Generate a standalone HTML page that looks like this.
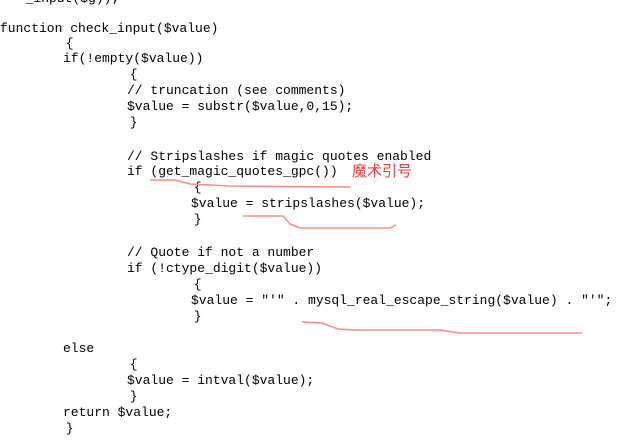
<!DOCTYPE html>
<html><head><meta charset="utf-8"><style>
body{margin:0;width:626px;height:445px;background:#fff;overflow:hidden;position:relative}
.l{position:absolute;left:0;font-family:"Liberation Mono","Noto Sans CJK SC",monospace;font-size:13px;line-height:16px;white-space:pre;color:#000}
.r{position:absolute;font-family:"Noto Sans CJK SC",sans-serif;font-size:15px;color:#f03a3a;line-height:16px}
</style></head><body>
<div class="l" style="top:-9px;left:10px">  _input($g));</div>
<div class="l" style="top:21px">function check_input($value)</div>
<div class="l" style="top:36px;left:58px"> {</div>
<div class="l" style="top:51px;left:63px">if(!empty($value))</div>
<div class="l" style="top:67px;left:122px"> {</div>
<div class="l" style="top:83px;left:127px">// truncation (see comments)</div>
<div class="l" style="top:99px;left:127px">$value = substr($value,0,15);</div>
<div class="l" style="top:115px;left:122px"> }</div>
<div class="l" style="top:149px;left:127px">// Stripslashes if magic quotes enabled</div>
<div class="l" style="top:164px;left:127px">if (get_magic_quotes_gpc())</div>
<div class="r" style="top:163px;left:352px">魔术引号</div>
<div class="l" style="top:180px;left:186px"> {</div>
<div class="l" style="top:196px;left:191px">$value = stripslashes($value);</div>
<div class="l" style="top:212px;left:186px"> }</div>
<div class="l" style="top:245px;left:127px">// Quote if not a number</div>
<div class="l" style="top:261px;left:127px">if (!ctype_digit($value))</div>
<div class="l" style="top:277px;left:186px"> {</div>
<div class="l" style="top:293px;left:191px">$value = "'" . mysql_real_escape_string($value) . "'";</div>
<div class="l" style="top:309px;left:186px"> }</div>
<div class="l" style="top:341px;left:63px">else</div>
<div class="l" style="top:357px;left:122px"> {</div>
<div class="l" style="top:373px;left:127px">$value = intval($value);</div>
<div class="l" style="top:389px;left:122px"> }</div>
<div class="l" style="top:405px;left:63px">return $value;</div>
<div class="l" style="top:421px;left:58px"> }</div>
<svg width="626" height="445" style="position:absolute;left:0;top:0" fill="none" stroke="#f88" stroke-width="1.5">
<path d="M150 180 L175 180 L190 184 L230 186 L350 187"/>
<path d="M243 216 L283 216 L290 224 L300 228 L390 228 L396 225"/>
<path d="M302 322 L322 323 L338 329 L355 330 L440 330 L460 333 L582 333"/>
</svg>
</body></html>
